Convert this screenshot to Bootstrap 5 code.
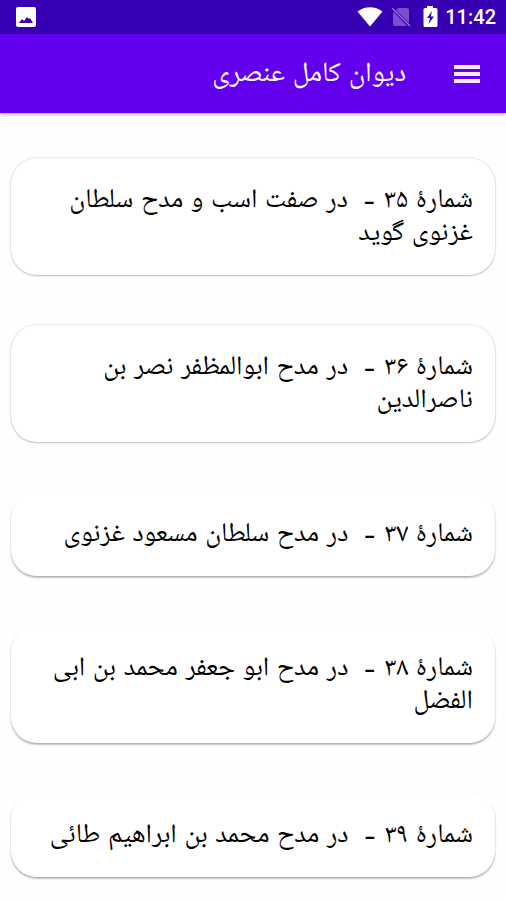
<!DOCTYPE html>
<html lang="fa" dir="rtl">
<head>
<meta charset="utf-8">
<meta name="viewport" content="width=device-width, initial-scale=1">
<title>دیوان کامل عنصری</title>
<link href="https://cdn.jsdelivr.net/npm/bootstrap@5.3.0/dist/css/bootstrap.min.css" rel="stylesheet">
<style>
  body { font-family: Inter, "Noto Naskh Arabic UI", "Noto Naskh Arabic", serif; background: #fefefe; color: #000; }
  .status-bar { background: #3700b3; color: #fff; height: 34px; padding: 0 10px 0 16px; }
  .status-time { font: 500 20px/36px Roboto, sans-serif; }
  .app-bar { background: #6200ee; min-height: 79px; padding: 0 20px; box-shadow: 0 1px 4px rgba(0,0,0,.4); }
  .menu-btn { width: 38px; height: 38px; margin-left: 42px; color: #fff; }
  .app-title { font-size: 28px; line-height: 34px; font-weight: 400; color: #fff; padding-top: 2px; }
  .poem-list { gap: 50px; padding: 45px 11px 24px; }
  .poem-card { background: #fff; border-radius: 26px; padding: 27px 22px 24px 30px; font-size: 27px; line-height: 33px;
    color: #000; box-shadow: 0 0 2px rgba(0,0,0,.2), 0 1px 2px rgba(0,0,0,.2); }
  .poem-card:hover { color: #000; }
  li:nth-child(n+3) .poem-card { box-shadow: 0 1px 2px rgba(0,0,0,.16), 0 2px 2px rgba(0,0,0,.2); }
</style>
</head>
<body>
<div class="status-bar d-flex align-items-center justify-content-between" dir="ltr">
  <svg width="20" height="20" viewBox="0 0 20 20" aria-hidden="true"><rect width="20" height="20" rx="2" fill="#fff"/><path d="M3 16 6 12l2 2 3-4 2 2 1-1 3 5z" fill="#3700b3"/></svg>
  <div class="d-flex align-items-center">
    <svg width="26" height="20" viewBox="0 0 26 20" aria-hidden="true"><path d="M.5 4.500C8-1.300 18-1.300 25.500 4.500L13 19.500z" fill="#fff"/></svg>
    <svg class="ms-2" width="20" height="20" viewBox="0 0 20 20" aria-hidden="true"><path d="M7 1h9q2 0 2 2v13L5 3zM3 5l13 14H4q-2 0-2-2V6z" fill="#9272d8" opacity=".7"/><path d="M1 1 19 19" stroke="#9272d8" stroke-width="1.500"/></svg>
    <svg class="ms-2 me-1" width="22" height="22" viewBox="0 0 22 22" aria-hidden="true"><path d="M8 0h6v2h3q1.500 0 1.500 1.500v16q0 1.500-1.500 1.500H6q-1.500 0-1.500-1.500v-16Q4.500 2 6 2h2z" fill="#fff"/><path d="M13 5 8 12h3l-1.500 6L15 10.500h-3.200z" fill="#3700b3"/></svg>
    <span class="status-time">11:42</span>
  </div>
</div>
<header class="app-bar d-flex align-items-center">
  <button type="button" class="menu-btn btn p-0 border-0 d-flex align-items-center justify-content-center" aria-label="فهرست">
    <svg width="26" height="20" viewBox="0 0 26 20" fill="currentColor" aria-hidden="true"><path d="M0 1h26v4H0zM0 8h26v4H0zM0 15h26v4H0z" opacity=".92"/></svg>
  </button>
  <h1 class="app-title m-0">دیوان کامل عنصری</h1>
</header>
<main>
  <ul class="poem-list list-unstyled d-flex flex-column m-0">
    <li><a class="poem-card d-block text-decoration-none" href="#p35">شمارهٔ ۳۵ -&nbsp; در صفت اسب و مدح سلطان غزنوی گوید</a></li>
    <li><a class="poem-card d-block text-decoration-none" href="#p36">شمارهٔ ۳۶ -&nbsp; در مدح ابوالمظفر نصر بن ناصرالدین</a></li>
    <li><a class="poem-card d-block text-decoration-none" href="#p37">شمارهٔ ۳۷ -&nbsp; در مدح سلطان مسعود غزنوی</a></li>
    <li><a class="poem-card d-block text-decoration-none" href="#p38">شمارهٔ ۳۸ -&nbsp; در مدح ابو جعفر محمد بن ابی الفضل</a></li>
    <li><a class="poem-card d-block text-decoration-none" href="#p39">شمارهٔ ۳۹ -&nbsp; در مدح محمد بن ابراهیم طائی</a></li>
  </ul>
</main>
<script src="https://cdn.jsdelivr.net/npm/bootstrap@5.3.0/dist/js/bootstrap.bundle.min.js"></script>
</body>
</html>
